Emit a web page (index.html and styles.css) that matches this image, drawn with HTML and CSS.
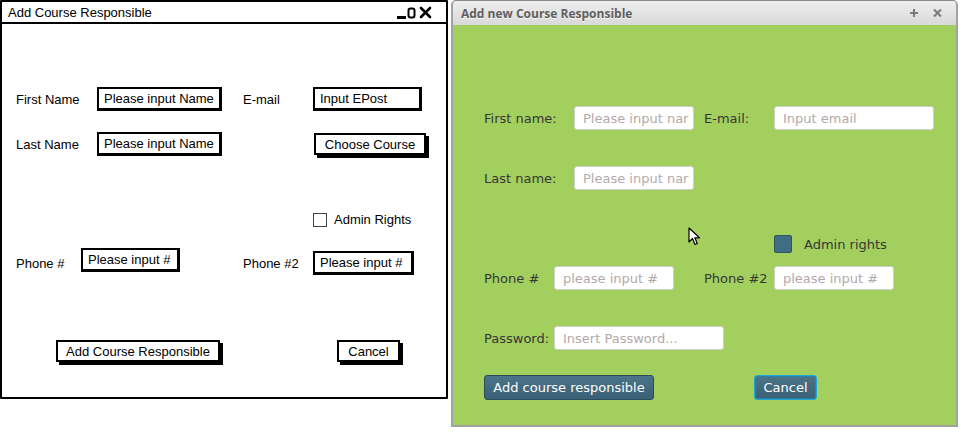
FILE: index.html
```html
<!DOCTYPE html>
<html>
<head>
<meta charset="utf-8">
<link rel="stylesheet" href="styles.css">
</head>
<body>
<div class="sketch">
  <div class="sk-title">
    <span>Add Course Responsible</span>
    <svg class="sk-ctrls" width="40" height="14" viewBox="0 0 40 14">
      <rect x="0" y="10" width="9" height="3" fill="#000"/>
      <rect x="11.5" y="2.5" width="6" height="9" rx="2" fill="none" stroke="#000" stroke-width="2"/>
      <path d="M24 2 L33 11 M33 2 L24 11" stroke="#000" stroke-width="2.6" stroke-linecap="round"/>
    </svg>
  </div>
  <div class="sk-body">
    <div class="sk-row sk-r1">
      <span class="sk-lab sk-c1">First Name</span>
      <span class="sk-input sk-name">Please input Name</span>
      <span class="sk-lab sk-c3">E-mail</span>
      <span class="sk-input sk-mail">Input EPost</span>
    </div>
    <div class="sk-row sk-r2">
      <span class="sk-lab sk-c1">Last Name</span>
      <span class="sk-input sk-name">Please input Name</span>
      <span class="sk-btn sk-choose">Choose Course</span>
    </div>
    <div class="sk-row sk-r3">
      <span class="sk-check"></span>
      <span class="sk-lab">Admin Rights</span>
    </div>
    <div class="sk-row sk-r4">
      <span class="sk-lab sk-c1b">Phone #</span>
      <span class="sk-input sk-phone1">Please input #</span>
      <span class="sk-lab sk-c3b">Phone #2</span>
      <span class="sk-input sk-phone2">Please input #</span>
    </div>
    <div class="sk-row sk-r5">
      <span class="sk-btn sk-add">Add Course Responsible</span>
      <span class="sk-btn sk-cancel">Cancel</span>
    </div>
  </div>
</div>

<div class="fx">
  <div class="fx-title">
    <span class="fx-title-text">Add new Course Responsible</span>
    <svg class="fx-ctrls" width="34" height="12" viewBox="0 0 34 12">
      <path d="M4 2 V10 M0 6 H8" stroke="#7a7a7a" stroke-width="2"/>
      <path d="M24 2.5 L31 9.5 M31 2.5 L24 9.5" stroke="#7a7a7a" stroke-width="2"/>
    </svg>
  </div>
  <div class="fx-body">
    <div class="fx-row fx-r1">
      <span class="fx-lab fx-w90">First name:</span>
      <span class="fx-input fx-w120"><span class="ph">Please input nar</span></span>
      <span class="fx-lab fx-gap10 fx-w70">E-mail:</span>
      <span class="fx-input fx-w160"><span class="ph">Input email</span></span>
    </div>
    <div class="fx-row fx-r2">
      <span class="fx-lab fx-w90">Last name:</span>
      <span class="fx-input fx-w120"><span class="ph">Please input nar</span></span>
    </div>
    <div class="fx-row fx-r3">
      <span class="fx-check"></span>
      <span class="fx-lab">Admin rights</span>
    </div>
    <div class="fx-row fx-r4">
      <span class="fx-lab fx-w70">Phone #</span>
      <span class="fx-input fx-w120"><span class="ph">please input #</span></span>
      <span class="fx-lab fx-gap30 fx-w70">Phone #2</span>
      <span class="fx-input fx-w120"><span class="ph">please input #</span></span>
    </div>
    <div class="fx-row fx-r5">
      <span class="fx-lab fx-w70">Password:</span>
      <span class="fx-input fx-w170"><span class="ph">Insert Password...</span></span>
    </div>
    <div class="fx-row fx-r6">
      <span class="fx-btn fx-add">Add course responsible</span>
      <span class="fx-btn fx-cancel">Cancel</span>
    </div>
  </div>
  <svg class="cursor" width="13" height="20" viewBox="0 0 13 20">
    <path d="M1 1 L1 15 L4.5 11.5 L7 17.5 L9.3 16.5 L6.8 10.8 L11.5 10.8 Z" fill="#fff" stroke="#000" stroke-width="1.2" stroke-linejoin="round"/>
  </svg>
</div>
</body>
</html>
```

FILE: styles.css
```css
html, body {
  margin: 0;
  padding: 0;
  background: #fff;
}
body {
  display: flex;
  align-items: flex-start;
  width: 961px;
  height: 432px;
  overflow: hidden;
}

/* ---------- sketch (left) ---------- */
.sketch {
  box-sizing: border-box;
  width: 448px;
  height: 399px;
  border: 2px solid #000;
  border-radius: 1px;
  font-family: "Liberation Sans", Arial, sans-serif;
  font-size: 13px;
  color: #000;
  display: flex;
  flex-direction: column;
}
.sk-title {
  height: 20px;
  border-bottom: 2px solid #000;
  display: flex;
  align-items: center;
  justify-content: space-between;
  padding: 0 9px 0 6px;
}
.sk-ctrls {
  margin-top: 1px;
}
.sk-body {
  padding-left: 14px;
  display: flex;
  flex-direction: column;
}
.sk-row {
  display: flex;
  align-items: center;
}
.sk-lab {
  white-space: nowrap;
}
.sk-c1 { width: 81px; }
.sk-c3 { width: 70px; margin-left: 21px; }
.sk-c1b { width: 65px; }
.sk-c3b { width: 70px; margin-left: 63px; }

.sk-input {
  box-sizing: border-box;
  height: 24px;
  border: 2px solid #000;
  border-right-width: 3px;
  border-bottom-width: 3px;
  padding: 0 0 0 5px;
  display: flex;
  align-items: center;
  white-space: nowrap;
  overflow: hidden;
  background: #fff;
}
.sk-name { width: 125px; }
.sk-mail { width: 109px; }
.sk-r1 { margin-top: 63px; }
.sk-r2 { margin-top: 21px; }
.sk-choose {
  margin-left: 92px;
  width: 112px;
}
.sk-btn {
  box-sizing: border-box;
  height: 22px;
  border: 2px solid #000;
  box-shadow: 3px 3px 0 #000;
  display: flex;
  align-items: center;
  justify-content: center;
  white-space: nowrap;
  background: #fff;
}
.sk-r3 {
  margin-top: 56px;
  padding-left: 297px;
}
.sk-check {
  box-sizing: border-box;
  width: 14px;
  height: 14px;
  border: 1px solid #444;
  margin-right: 7px;
}
.sk-r4 {
  margin-top: 21px;
  align-items: flex-start;
  height: 28px;
}
.sk-r4 .sk-lab { margin-top: 8px; }
.sk-phone1 { width: 99px; }
.sk-phone2 { width: 101px; margin-top: 3px; }
.sk-r5 {
  margin-top: 64px;
  padding-left: 40px;
}
.sk-add { width: 164px; }
.sk-cancel { width: 63px; margin-left: 117px; }

/* ---------- JavaFX (right) ---------- */
.fx {
  position: relative;
  box-sizing: border-box;
  width: 507px;
  height: 427px;
  margin-left: 3px;
  border: 2px solid #a2a2a2;
  border-top: 1px solid #8a8a8a;
  border-radius: 5px 5px 0 0;
  background: #a3cf5f;
  font-family: "DejaVu Sans", sans-serif;
  font-size: 13px;
  color: #363636;
  display: flex;
  flex-direction: column;
  overflow: hidden;
}
.fx-title {
  height: 24px;
  flex: none;
  background: linear-gradient(#eeeeee, #d9d9d9);
  display: flex;
  align-items: center;
  justify-content: space-between;
  padding: 0 12px 0 8px;
}
.fx-title-text {
  font-family: "Open Sans", "DejaVu Sans", sans-serif;
  font-weight: bold;
  font-size: 12px;
  color: #5e5e5e;
  text-shadow: 0 1px 0 #f6f6f6;
}
.fx-body {
  padding-left: 31px;
  display: flex;
  flex-direction: column;
}
.fx-row {
  display: flex;
  align-items: center;
}
.fx-lab { white-space: nowrap; }
.fx-w90 { width: 90px; }
.fx-w70 { width: 70px; }
.fx-gap10 { margin-left: 10px; }
.fx-gap30 { margin-left: 30px; }
.fx-input {
  box-sizing: border-box;
  height: 24px;
  background: #fff;
  border: 1px solid #cfcfcf;
  border-radius: 3px;
  padding-left: 8px;
  display: flex;
  align-items: center;
  overflow: hidden;
  white-space: nowrap;
}
.ph { color: #b3a9ab; }
.fx-w120 { width: 120px; }
.fx-w160 { width: 160px; }
.fx-w170 { width: 170px; }
.fx-r1 { margin-top: 81px; }
.fx-r2 { margin-top: 36px; }
.fx-r3 {
  margin-top: 45px;
  padding-left: 290px;
}
.fx-check {
  box-sizing: border-box;
  width: 18px;
  height: 18px;
  background: #416d84;
  border: 1px solid #2f5567;
  border-radius: 2px;
  margin-right: 12px;
}
.fx-r4 { margin-top: 13px; }
.fx-r5 { margin-top: 36px; }
.fx-r6 { margin-top: 25px; }
.fx-btn {
  box-sizing: border-box;
  height: 25px;
  border-radius: 3px;
  background: linear-gradient(#4c7489, #3a6075);
  border: 1px solid #2b4b5c;
  color: #fff;
  display: flex;
  align-items: center;
  justify-content: center;
  white-space: nowrap;
  font-size: 13px;
}
.fx-add { width: 170px; }
.fx-cancel {
  width: 63px;
  margin-left: 100px;
  border: 1px solid #1ea6d6;
  box-shadow: inset 0 0 0 1px #2d7fa3;
}
.cursor {
  position: absolute;
  left: 235px;
  top: 226px;
}
```
